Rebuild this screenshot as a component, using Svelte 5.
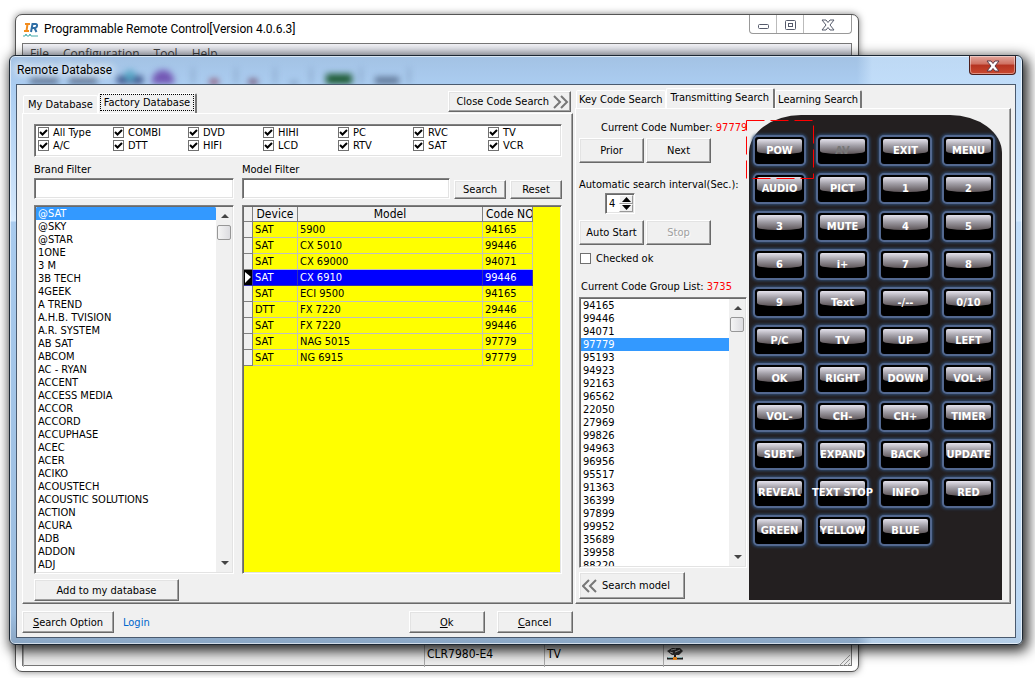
<script lang="ts">
  const types = ['All Type', 'COMBI', 'DVD', 'HIHI', 'PC', 'RVC', 'TV', 'A/C', 'DTT', 'HIFI', 'LCD', 'RTV', 'SAT', 'VCR'];
  let checkedTypes = $state(types.map(() => true));

  const brands = [
    '@SAT', '@SKY', '@STAR', '1ONE', '3 M', '3B TECH', '4GEEK', 'A TREND', 'A.H.B. TVISION', 'A.R. SYSTEM',
    'AB SAT', 'ABCOM', 'AC - RYAN', 'ACCENT', 'ACCESS MEDIA', 'ACCOR', 'ACCORD', 'ACCUPHASE', 'ACEC', 'ACER',
    'ACIKO', 'ACOUSTECH', 'ACOUSTIC SOLUTIONS', 'ACTION', 'ACURA', 'ADB', 'ADDON', 'ADJ'
  ];
  let brand = $state('@SAT');
  let brandFilter = $state('');
  let modelFilter = $state('');

  const models = [
    { device: 'SAT', model: '5900', code: '94165' },
    { device: 'SAT', model: 'CX 5010', code: '99446' },
    { device: 'SAT', model: 'CX 69000', code: '94071' },
    { device: 'SAT', model: 'CX 6910', code: '99446' },
    { device: 'SAT', model: 'ECI 9500', code: '94165' },
    { device: 'DTT', model: 'FX 7220', code: '29446' },
    { device: 'SAT', model: 'FX 7220', code: '99446' },
    { device: 'SAT', model: 'NAG 5015', code: '97779' },
    { device: 'SAT', model: 'NG 6915', code: '97779' }
  ];
  let selectedModel = $state(3);

  const codes = [
    '94165', '99446', '94071', '97779', '95193', '94923', '92163', '96562', '22050', '27969', '99826',
    '94963', '96956', '95517', '91363', '36399', '97899', '99952', '35689', '39958', '88220'
  ];
  let code = $state('97779');
  let interval = $state('4');
  let checkedOk = $state(false);

  const keys = [
    'POW', 'AV', 'EXIT', 'MENU', 'AUDIO', 'PICT', '1', '2', '3', 'MUTE', '4', '5', '6', 'i+', '7', '8',
    '9', 'Text', '-/--', '0/10', 'P/C', 'TV', 'UP', 'LEFT', 'OK', 'RIGHT', 'DOWN', 'VOL+',
    'VOL-', 'CH-', 'CH+', 'TIMER', 'SUBT.', 'EXPAND', 'BACK', 'UPDATE', 'REVEAL', 'TEXT STOP', 'INFO', 'RED',
    'GREEN', 'YELLOW', 'BLUE'
  ];

  function step(by: number) {
    interval = String(Math.max(1, Number(interval) + by));
  }
</script>

{#snippet scrollbar()}
  <div class="scrollbar" aria-hidden="true">
    <svg width="17" height="17"><path d="M5 11l4-4 4 4z" fill="#444" /></svg>
    <div class="thumb"></div>
    <svg class="down" width="17" height="17"><path d="M5 6l4 4 4-4z" fill="#444" /></svg>
  </div>
{/snippet}

{#snippet cross(edge: string)}
  <svg width="16" height="12">
    <path d="M2 1h4l2 2.500L10 1h4l-4 5 4 5h-4L8 8.500 6 11H2l4-5z" fill="#fff" stroke={edge} />
  </svg>
{/snippet}

<div class="desktop">
  <section class="main-window">
    <header class="main-title">
      <svg class="app-icon" width="16" height="16" viewBox="0 0 16 16">
        <path d="M2 2h5M1 9h5M4.500 2l-1 7" stroke="#f28c1e" stroke-width="2" fill="none" />
        <path d="M8 10l1.500-8h3q2 0 1.500 2t-2.500 2h-2M11.500 6l2 4" stroke="#2f6ea5" stroke-width="2" fill="none" />
        <path d="M0 14h2l1-2 1 2h2l1-2 1 2h7" stroke="#4aa" fill="none" />
      </svg>
      <h1>Programmable Remote Control[Version 4.0.6.3]</h1>
      <div class="win-buttons">
        <button aria-label="Minimize"><svg width="14" height="12"><rect x="2.500" y="5.500" width="10" height="4" rx="1" fill="#fff" stroke="#555a6b" /></svg></button>
        <button aria-label="Maximize"><svg width="14" height="12"><rect x="2.500" y="1.500" width="10" height="9" rx="1" fill="#fff" stroke="#555a6b" /><rect x="5.500" y="4.500" width="4" height="3" fill="#fff" stroke="#555a6b" /></svg></button>
        <button class="wide" aria-label="Close">{@render cross('#555a6b')}</button>
      </div>
    </header>
    <div class="main-client">
      <nav class="menu">
        <span>File</span><span>Configuration</span><span>Tool</span><span>Help</span>
      </nav>
      <footer class="status">
        <span></span>
        <span>CLR7980-E4</span>
        <span>TV</span>
        <span>
          <svg width="18" height="14" viewBox="0 0 18 14">
            <path d="M1 4l5-3 8 0 3 3-4 4-7 0z" fill="#333" />
            <path d="M5 3l5-1M9 5l5-2M4 5l3 1" stroke="#ccc" />
            <path d="M1 11.500h16M9 8v4" stroke="#222" stroke-width="2" />
            <path d="M2 10.500h14" stroke="#9cc" />
            <rect x="7" y="10" width="4" height="3" fill="#f08a1c" />
          </svg>
        </span>
        <svg class="grip" width="14" height="14"><path d="M2 13L13 2M6 13l7-7M10 13l3-3" stroke="#999" /></svg>
      </footer>
    </div>
  </section>

  <section class="dialog">
    <header class="dialog-title">
      <svg class="behind" width="440" height="28" aria-hidden="true">
        <g fill="#5d7494">
          <rect x="12" y="21" width="28" height="12" />
          <rect x="51" y="21" width="28" height="12" />
          <rect x="99" y="20" width="26" height="14" fill="#3a4f86" />
          <circle cx="112" cy="20" r="6" fill="#57a5c4" />
          <circle cx="145" cy="25" r="11" fill="#7357b4" />
          <rect x="174" y="12" width="2" height="16" fill="#7f9dc0" />
          <circle cx="196" cy="28" r="5" fill="#8a3a58" />
          <rect x="217" y="12" width="2" height="16" fill="#7f9dc0" />
          <circle cx="235" cy="28" r="5" fill="#6a3a58" />
          <rect x="256" y="12" width="2" height="16" fill="#7f9dc0" />
          <rect x="272" y="26" width="8" height="3" />
          <rect x="292" y="12" width="2" height="16" fill="#7f9dc0" />
          <rect x="308" y="18" width="26" height="14" fill="#1c5a33" />
          <rect x="342" y="12" width="2" height="16" fill="#7f9dc0" />
          <rect x="357" y="21" width="24" height="12" />
          <rect x="390" y="12" width="2" height="16" fill="#7f9dc0" />
        </g>
      </svg>
      <h2>Remote Database</h2>
      <button class="close" aria-label="Close">{@render cross('#5a3a48')}</button>
    </header>

    <div class="client">
      <div class="columns">
        <div class="left">
          <div class="tabs">
            <button class="tab">My Database</button>
            <button class="tab active"><span class="focus">Factory Database</span></button>
            <button class="btn close-search">
              Close Code Search
              <svg width="16" height="14"><path d="M1 1l6 6-6 6M8 1l6 6-6 6" stroke="#777" stroke-width="2" fill="none" /></svg>
            </button>
          </div>
          <div class="panel database">
            <div class="types sunken">
              {#each types as type, i}
                <label><input type="checkbox" bind:checked={checkedTypes[i]} />{type}</label>
              {/each}
            </div>
            <div class="browse">
              <div class="brand-col">
                <label for="brand-filter">Brand Filter</label>
                <input id="brand-filter" class="text sunken" bind:value={brandFilter} />
                <div class="list sunken">
                  <select size="28" aria-label="Brands" bind:value={brand}>
                    {#each brands as b}
                      <option>{b}</option>
                    {/each}
                  </select>
                  {@render scrollbar()}
                </div>
              </div>
              <div class="model-col">
                <label for="model-filter">Model Filter</label>
                <div class="model-filter">
                  <input id="model-filter" class="text sunken" bind:value={modelFilter} />
                  <button class="btn">Search</button>
                  <button class="btn">Reset</button>
                </div>
                <div class="grid sunken">
                  <table>
                    <thead>
                      <tr><th></th><th>Device</th><th>Model</th><th>Code NO</th></tr>
                    </thead>
                    <tbody>
                      {#each models as m, i}
                        <tr class:selected={i === selectedModel} onclick={() => (selectedModel = i)}>
                          <td class="mark">
                            {#if i === selectedModel}<svg width="8" height="15"><path d="M1 2l6 5-6 6z" fill="#fff" /></svg>{/if}
                          </td>
                          <td>{m.device}</td>
                          <td>{m.model}</td>
                          <td>{m.code}</td>
                        </tr>
                      {/each}
                    </tbody>
                  </table>
                </div>
              </div>
            </div>
            <button class="btn add">Add to my database</button>
          </div>
        </div>

        <div class="right">
          <div class="tabs">
            <button class="tab">Key Code Search</button>
            <button class="tab active">Transmitting Search</button>
            <button class="tab edge">Learning Search</button>
          </div>
          <div class="panel transmit">
            <div class="controls">
              <p class="current">Current Code Number: <b>97779</b></p>
              <div class="pair">
                <button class="btn">Prior</button>
                <button class="btn">Next</button>
              </div>
              <label class="interval" for="interval">Automatic search interval(Sec.):</label>
              <div class="spin sunken">
                <input id="interval" bind:value={interval} />
                <div>
                  <button aria-label="Increase" onclick={() => step(1)}><svg width="9" height="5"><path d="M0 5l4.500-5 4.500 5z" /></svg></button>
                  <button aria-label="Decrease" onclick={() => step(-1)}><svg width="9" height="5"><path d="M0 0l4.500 5 4.500-5z" /></svg></button>
                </div>
              </div>
              <div class="pair">
                <button class="btn">Auto Start</button>
                <button class="btn" disabled>Stop</button>
              </div>
              <label class="ok-check"><input type="checkbox" bind:checked={checkedOk} />Checked ok</label>
              <label class="group" for="codes">Current Code Group List: <b>3735</b></label>
              <div class="list codes sunken">
                <select id="codes" size="20" bind:value={code}>
                  {#each codes as c}
                    <option>{c}</option>
                  {/each}
                </select>
                {@render scrollbar()}
              </div>
              <button class="btn search-model">
                <svg width="16" height="14"><path d="M7 1l-6 6 6 6M14 1l-6 6 6 6" stroke="#777" stroke-width="2" fill="none" /></svg>
                Search model
              </button>
            </div>
            <div class="remote">
              {#each keys as key}
                <button class="key" disabled={key === 'AV'}><span>{key}</span></button>
              {/each}
              <svg class="marquee" width="68" height="59"><rect x="0.500" y="0.500" width="67" height="58" fill="none" stroke="#f00" stroke-dasharray="18 6" /></svg>
            </div>
          </div>
        </div>
      </div>

      <footer class="actions">
        <button class="btn option"><u>S</u>earch Option</button>
        <a href="#login">Login</a>
        <button class="btn ok"><u>O</u>k</button>
        <button class="btn"><u>C</u>ancel</button>
      </footer>
    </div>
  </section>
</div>

<style>
  :global(body) {
    background: #fff;
    font-family: 'DejaVu Sans Condensed', 'DejaVu Sans', sans-serif;
    font-stretch: condensed;
    font-size: 11px;
    line-height: 13px;
    color: #000;
  }

  h1, h2, p { margin: 0; }

  h1, h2 {
    font: 12px/16px Roboto, 'Open Sans', sans-serif;
  }

  button, input, select {
    font: inherit;
    color: inherit;
    box-sizing: border-box;
    margin: 0;
  }

  .desktop {
    display: grid;
    grid-template-columns: minmax(0, 1fr);
    min-height: 100vh;
    overflow: hidden;
  }

  .main-window, .dialog {
    grid-area: 1 / 1;
    box-sizing: border-box;
    display: flex;
    flex-direction: column;
  }

  /* main window */
  .main-window {
    margin: 14px 176px 6px 15px;
    border: 1px solid #555;
    border-radius: 7px;
    background: #fff;
    box-shadow: 0 0 7px rgba(0, 0, 0, 0.5);
    padding: 0 6px 5px;
  }
  .main-title {
    display: flex;
    height: 28px;
  }
  .app-icon { margin: 7px 5px 0 1px; }
  .main-title h1 {
    flex: 1;
    margin-top: 6px;
  }
  .win-buttons {
    display: flex;
    height: 18px;
    border: 1px solid #999;
    border-top: 0;
    border-radius: 0 0 4px 4px;
  }
  .win-buttons button {
    width: 27px;
    padding: 2px 0 0;
    border: 0;
    border-right: 1px solid #bbb;
    background: none;
    line-height: 0;
  }
  .win-buttons .wide {
    width: 47px;
    border-right: 0;
  }
  .main-client {
    flex: 1;
    display: flex;
    flex-direction: column;
    justify-content: space-between;
    border: 1px solid #777;
    background: #efefef;
  }
  .menu {
    display: flex;
    gap: 14px;
    padding: 2px 7px;
    font: 12px/16px 'Open Sans', 'Noto Sans', sans-serif;
    color: #444;
    background: linear-gradient(#f4f4f8, #b9bfd0);
  }
  .status {
    display: grid;
    grid-template-columns: 401px 120px 119px 1fr 14px;
    height: 21px;
    align-items: stretch;
    font-size: 12px;
    line-height: 20px;
  }
  .status span {
    border-left: 1px solid #aaa;
    padding-left: 2px;
  }
  .status span svg { margin-top: 3px; }
  .grip { align-self: end; }

  /* dialog */
  .dialog {
    position: relative;
    margin: 55px 12px 33px 9px;
    border: 1px solid #1c2733;
    border-radius: 6px;
    padding: 0 6px 6px;
    background:
      linear-gradient(90deg, transparent calc(100% - 165px), rgba(208, 232, 255, 0.6) calc(100% - 150px)),
      linear-gradient(#a3c2e4, #abcdf1 30px, #cfe4fa 150px, #d5e9fd 165px, #a9cbee 166px, #9cbddf calc(100% - 30px), #8aa6c4);
    box-shadow: inset 0 0 0 1px rgba(255, 255, 255, 0.6), 3px 4px 13px 2px rgba(0, 0, 0, 0.85);
  }
  .dialog-title {
    display: flex;
    justify-content: space-between;
    height: 28px;
  }
  .dialog-title h2 {
    margin-top: 6px;
    padding: 0 8px 0 1px;
    text-shadow: 0 0 8px #fff, 0 0 8px #fff, 0 0 12px #fff;
    z-index: 1;
  }
  .behind {
    position: absolute;
    left: 8px;
    top: 0;
    filter: blur(3px);
  }
  .close {
    width: 47px;
    height: 19px;
    padding: 2px 0 0;
    line-height: 0;
    border: 1px solid #4d1e1b;
    border-top: 0;
    border-radius: 0 0 4px 4px;
    background: linear-gradient(#e3a79d, #cf6f60 45%, #b53321 50%, #c9482f);
    box-shadow: inset 0 0 0 1px rgba(255, 255, 255, 0.4);
  }
  .client {
    position: relative;
    border: 1px solid #4a5a6e;
    background: #f0f0f0;
    padding: 0 4px 3px 5px;
  }
  .columns { display: flex; }
  .left {
    flex: 1;
    min-width: 0;
  }
  .right {
    flex: 0 0 436px;
    margin-left: 2px;
  }
  .left, .right {
    display: flex;
    flex-direction: column;
  }

  .sunken {
    border: 1px solid #a0a0a0;
    border-color: #808080 #fff #fff #808080;
    box-shadow: inset 1px 1px 0 #696969, inset -1px -1px 0 #e3e3e3;
    background: #fff;
    box-sizing: border-box;
  }
  .btn {
    padding: 0;
    border: 1px solid;
    border-color: #fff #696969 #696969 #fff;
    box-shadow: inset -1px -1px 0 #a0a0a0, inset 1px 1px 0 #e3e3e3;
    background: #f0f0f0;
    white-space: nowrap;
  }
  .btn:active { border-color: #696969 #fff #fff #696969; }
  .btn:disabled {
    color: #a0a0a0;
    text-shadow: 1px 1px 0 #fff;
  }

  .tabs {
    display: flex;
    align-items: flex-end;
    height: 28px;
    padding-left: 1px;
  }
  .right .tabs { height: 23px; }
  .tab {
    height: 18px;
    padding: 0 4px;
    border: 1px solid #fff;
    border-bottom: 0;
    border-radius: 2px 2px 0 0;
    background: #f0f0f0;
    white-space: nowrap;
  }
  .right .tab { padding: 0 2px; }
  .tab.active {
    height: 21px;
    padding: 0 1px 3px;
    border-right: 2px solid #777;
    margin-bottom: -1px;
  }
  .right .tab.active { padding: 0 4px 3px; }
  .tab.edge { border-right: 2px solid #777; }
  .focus {
    display: block;
    padding: 0 3px;
    line-height: 15px;
    border: 1px dotted #000;
  }
  .close-search {
    display: flex;
    align-items: center;
    gap: 4px;
    height: 21px;
    padding: 0 1px 0 7px;
    margin: 0 2px 1px auto;
  }
  .panel {
    flex: 1;
    border: 1px solid;
    border-color: #fff #696969 #696969 #fff;
    box-shadow: inset -1px -1px 0 #a0a0a0;
  }

  /* factory database */
  .database {
    padding: 10px 10px 2px 11px;
  }
  .types {
    display: grid;
    grid-template-columns: repeat(6, 75px) 1fr;
    align-content: start;
    height: 33px;
    padding: 1px 3px;
    overflow: hidden;
  }
  .types label, .ok-check {
    display: flex;
    align-items: center;
    gap: 4px;
    height: 13px;
  }
  input[type='checkbox'] {
    appearance: none;
    width: 11px;
    height: 11px;
    border: 1px solid #707070;
    background: #fff center / 9px 9px no-repeat;
  }
  input[type='checkbox']:checked {
    background-image: url("data:image/svg+xml,%3Csvg xmlns='http://www.w3.org/2000/svg' viewBox='0 0 9 9'%3E%3Cpath d='M1 4l2.500 2.500L8 2' fill='none' stroke='%23000' stroke-width='2'/%3E%3C/svg%3E");
  }
  .browse {
    display: flex;
    gap: 8px;
    margin-top: 6px;
  }
  .brand-col, .model-col {
    display: flex;
    flex-direction: column;
  }
  .brand-col { flex: 0 0 200px; }
  .model-col {
    flex: 1;
    min-width: 0;
  }
  .text {
    height: 21px;
    padding: 0 3px;
    margin-top: 2px;
  }
  .model-filter {
    display: flex;
    gap: 4px;
    align-items: flex-end;
  }
  .model-filter .text {
    flex: 1;
    min-width: 0;
  }
  .model-filter .btn {
    width: 52px;
    height: 19px;
  }
  .list {
    display: flex;
    margin-top: 6px;
    padding: 1px;
    overflow: hidden;
  }
  .brand-col .list, .grid { height: 369px; }
  select {
    flex: 1;
    min-width: 0;
    height: 100%;
    padding: 0;
    border: 0;
    outline: 0;
    background: #fff;
    overflow: hidden;
    scrollbar-width: none;
  }
  option {
    height: 13px;
    min-height: 13px;
    line-height: 13px;
    padding: 0 2px;
  }
  option:checked {
    background: #3399ff linear-gradient(#3399ff, #3399ff);
    color: #fff;
  }
  .scrollbar {
    display: flex;
    flex-direction: column;
    width: 16px;
    background: #f0f0f0;
  }
  .thumb {
    height: 15px;
    border: 1px solid #979797;
    border-radius: 2px;
    background: linear-gradient(90deg, #f5f5f5, #dcdce0);
    box-sizing: border-box;
    margin: 1px;
  }
  .down { margin-top: auto; }
  .grid {
    margin-top: 6px;
    padding: 1px;
    background: #ff0;
  }
  table {
    table-layout: fixed;
    width: 289px;
    border-collapse: collapse;
  }
  th, td {
    height: 15px;
    padding: 0 0 0 2px;
    border-right: 1px solid #c0c0c0;
    border-bottom: 1px solid #c0c0c0;
    overflow: hidden;
    white-space: nowrap;
  }
  th {
    height: 14px;
    padding: 0;
    background: #f0f0f0;
    border-color: #808080;
    font-weight: normal;
    font-size: 12px;
    line-height: 14px;
  }
  th:nth-child(1) { width: 8px; }
  th:nth-child(2) { width: 44px; }
  th:nth-child(4) {
    width: 49px;
    text-align: left;
    text-indent: 3px;
  }
  .mark {
    padding: 0;
    background: #f0f0f0;
    border-color: #808080;
    line-height: 0;
  }
  .selected td {
    background: #00f;
    color: #fff;
    border-color: #33a;
  }
  .selected .mark { background: #000; }
  .add {
    width: 145px;
    height: 22px;
    margin-top: 5px;
  }

  /* transmitting search */
  .transmit {
    display: flex;
    padding-bottom: 3px;
  }
  .controls {
    flex: 0 0 168px;
    min-width: 0;
    display: flex;
    flex-direction: column;
    padding: 12px 2px 1px 3px;
  }
  b {
    font-weight: normal;
    color: #f00;
  }
  .current {
    padding-left: 22px;
    overflow: hidden;
    white-space: nowrap;
  }
  .pair {
    display: flex;
    gap: 2px;
    margin-top: 4px;
  }
  .pair .btn {
    width: 65px;
    height: 25px;
  }
  .interval {
    margin-top: 15px;
    white-space: nowrap;
  }
  .spin {
    display: flex;
    width: 30px;
    height: 21px;
    margin: 2px 0 2px 26px;
    padding: 1px;
  }
  .spin input {
    width: 12px;
    padding: 0 0 0 2px;
    border: 0;
  }
  .spin div {
    display: flex;
    flex-direction: column;
    width: 15px;
  }
  .spin button {
    flex: 1;
    padding: 0;
    border: 1px solid #999;
    border-color: #fff #999 #999 #fff;
    background: #f0f0f0;
    line-height: 0;
  }
  .ok-check {
    margin-top: 7px;
    padding-left: 1px;
    gap: 5px;
  }
  .group {
    margin: 15px 0 0 2px;
    white-space: nowrap;
  }
  .codes {
    flex: 1 1 0;
    min-height: 0;
    margin-top: 4px;
  }
  .search-model {
    display: flex;
    align-items: center;
    gap: 4px;
    width: 106px;
    height: 27px;
    margin-top: 4px;
    padding-left: 2px;
  }
  .remote {
    position: relative;
    display: grid;
    grid-template-columns: repeat(4, 53px);
    grid-auto-rows: 31px;
    gap: 7px 10px;
    align-content: start;
    box-sizing: border-box;
    width: 253px;
    margin-top: 6px;
    padding: 20px 0 52px 4px;
    background: #231f20;
    border-radius: 52px 52px 0 0 / 38px 38px 0 0;
  }
  .key {
    position: relative;
    padding: 0;
    border: 2px solid #53688f;
    border-radius: 5px;
    background: #000;
    box-shadow: 0 0 3px 1px #2d4a70;
    color: #fff;
    font-weight: bold;
    white-space: nowrap;
    display: flex;
    align-items: center;
    justify-content: center;
  }
  .key::before {
    content: '';
    position: absolute;
    inset: 2px 2px 10px;
    border-radius: 2px 2px 40% 40% / 2px 2px 3px 3px;
    background: linear-gradient(#e4e2ec, #a19ea6 45%, #5d5558);
  }
  .key span { position: relative; }
  .key:disabled { color: #777; }
  .marquee {
    position: absolute;
    left: -3px;
    top: 5px;
  }

  .actions {
    display: flex;
    align-items: center;
    margin-top: 6px;
    padding: 1px 0;
  }
  .actions .btn {
    width: 76px;
    height: 22px;
  }
  .actions .option { width: 92px; }
  .actions a {
    margin-left: 9px;
    color: #0066cc;
    text-decoration: none;
  }
  .actions .ok { margin: 0 12px 0 259px; }
</style>
